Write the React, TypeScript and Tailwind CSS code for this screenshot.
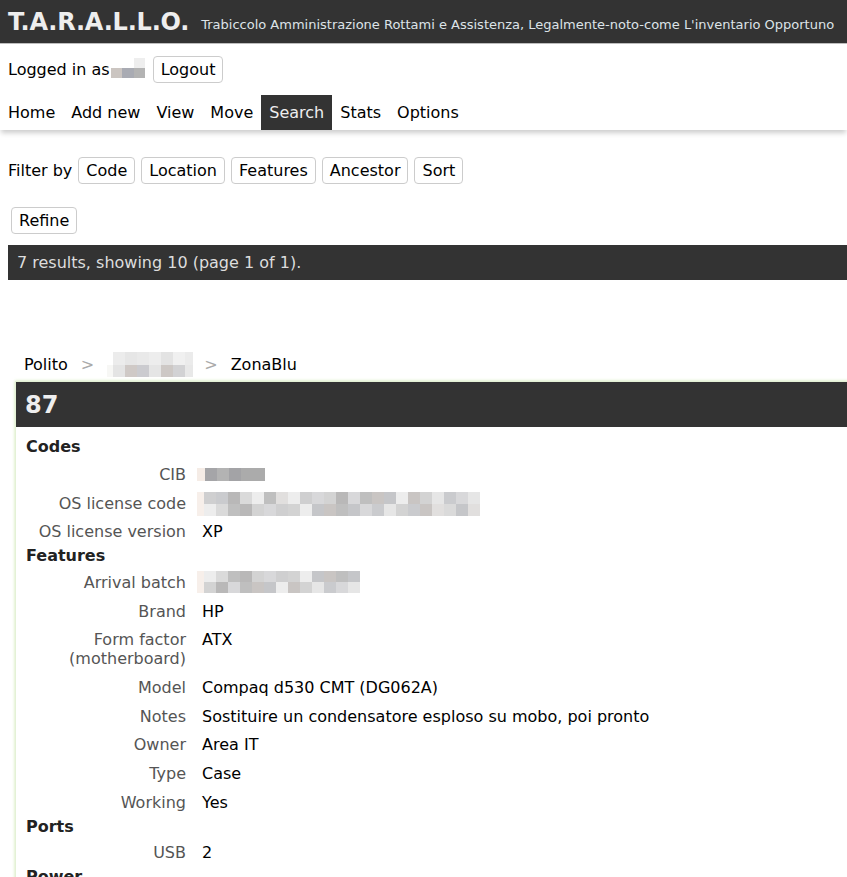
import React from 'react';

const gray = [
  'bg-[#c5c6c9]',
  'bg-[#d3d3d3]',
  'bg-[#bfbfbf]',
  'bg-[#cfcfd0]',
  'bg-[#dadada]',
  'bg-[#e6e6e6]',
  'bg-[#c9c5c3]',
  'bg-[#d8d8da]',
  'bg-[#ededed]',
  'bg-[#b9b8b8]',
  'bg-[#e1dfde]',
  'bg-[#cacbce]',
];

function Blur({ cols, rows, seed, cell }: { cols: number; rows: number; seed: number; cell: string }) {
  return (
    <span className="inline-block h-[18px] align-top ml-[-5px]">
      <span className="flex flex-col -mt-[3px]">
        {Array.from({ length: rows }).map((_, r) => (
          <span key={r} className="flex">
            <span className={`w-[7px] ${cell} bg-[#f7efea]`} />
            {Array.from({ length: cols }).map((_, c) => (
              <span key={c} className={`w-[12px] ${cell} ${gray[(c * 7 + r * 5 + seed + ((c * c) % 5)) % gray.length]}`} />
            ))}
          </span>
        ))}
      </span>
    </span>
  );
}

function Btn({ children }: { children: React.ReactNode }) {
  return (
    <button className="h-[27px] px-[7px] border border-[#cccccc] rounded-[4px] bg-white text-black leading-[normal]">
      {children}
    </button>
  );
}

type Row = { label: string; value?: string; blur?: React.ReactNode };

const sections: { title: string; rows: Row[] }[] = [
  {
    title: 'Codes',
    rows: [
      {
        label: 'CIB',
        blur: (
          <span className="inline-flex mt-[2px] ml-[-5px] align-top">
            <span className="w-[8px] h-[13px] bg-[#f5ece6]" />
            <span className="w-[12px] h-[13px] bg-[#a5a5a8]" />
            <span className="w-[12px] h-[13px] bg-[#b3b3b3]" />
            <span className="w-[12px] h-[13px] bg-[#a3a3a6]" />
            <span className="w-[12px] h-[13px] bg-[#ababab]" />
            <span className="w-[12px] h-[13px] bg-[#ababab]" />
          </span>
        ),
      },
      { label: 'OS license code', blur: <Blur cols={23} rows={2} seed={3} cell="h-[12px]" /> },
      { label: 'OS license version', value: 'XP' },
    ],
  },
  {
    title: 'Features',
    rows: [
      { label: 'Arrival batch', blur: <Blur cols={13} rows={2} seed={8} cell="h-[11px]" /> },
      { label: 'Brand', value: 'HP' },
      { label: 'Form factor (motherboard)', value: 'ATX' },
      { label: 'Model', value: 'Compaq d530 CMT (DG062A)' },
      { label: 'Notes', value: 'Sostituire un condensatore esploso su mobo, poi pronto' },
      { label: 'Owner', value: 'Area IT' },
      { label: 'Type', value: 'Case' },
      { label: 'Working', value: 'Yes' },
    ],
  },
  { title: 'Ports', rows: [{ label: 'USB', value: '2' }] },
  { title: 'Power', rows: [{ label: 'Power connector', value: 'ATX 24 pin' }] },
];

const nav = ['Home', 'Add new', 'View', 'Move', 'Search', 'Stats', 'Options'];

export default function App() {
  return (
    <div className="font-['DejaVu_Sans','Liberation_Sans',sans-serif] text-[16px] leading-[normal] text-black bg-white min-h-screen overflow-hidden">
      {/* header */}
      <div className="h-[44px] bg-[#333333] border-b border-[#bdbdbd] flex items-center pl-2 whitespace-nowrap overflow-hidden">
        <span className="text-[24px] font-bold text-[#eeeeee] tracking-[-0.2px]">T.A.R.A.L.L.O.</span>
        <span className="ml-[12px] mt-[5px] text-[13px] text-[#dde3e8]">
          Trabiccolo Amministrazione Rottami e Assistenza, Legalmente-noto-come L'inventario Opportuno
        </span>
      </div>

      <div className="flex items-center pl-2 pt-[12px]">
        <span>Logged in as</span>
        <span className="inline-flex flex-col ml-[1px] mt-[-4px]">
          <span className="flex">
            <span className="w-[11px] h-[10px] bg-white" />
            <span className="w-[12px] h-[10px] bg-white" />
            <span className="w-[11px] h-[10px] bg-[#eeeeee]" />
          </span>
          <span className="flex">
            <span className="w-[11px] h-[10px] bg-[#cbc5c1]" />
            <span className="w-[12px] h-[10px] bg-[#a9abb3]" />
            <span className="w-[11px] h-[10px] bg-[#b3b3b3]" />
          </span>
        </span>
        <span className="ml-[8px]">
          <Btn>Logout</Btn>
        </span>
      </div>

      <nav className="mt-3 flex bg-white shadow-[0_4px_5px_-1px_rgba(0,0,0,0.2)]">
        {nav.map((n) => (
          <span key={n} className={`px-2 py-2 ${n === 'Search' ? 'bg-[#333333] text-[#eeeeee]' : ''}`}>
            {n}
          </span>
        ))}
      </nav>

      <div className="mt-[27px] flex items-center pl-2 gap-[6px]">
        <span>Filter by</span>
        <Btn>Code</Btn>
        <Btn>Location</Btn>
        <Btn>Features</Btn>
        <Btn>Ancestor</Btn>
        <Btn>Sort</Btn>
      </div>

      <div className="mt-[23px] ml-[11px]">
        <Btn>Refine</Btn>
      </div>

      <div className="mt-[11px] ml-2 h-[35px] bg-[#333333] text-[#dddddd] flex items-center pl-[9px]">
        7 results, showing 10 (page 1 of 1).
      </div>

      {/* breadcrumb */}
      <div className="mt-[72px] pl-[24px] flex items-center">
        <span>Polito</span>
        <span className="mx-[13px] text-[#aaaaaa]">&gt;</span>
        <span className="inline-flex flex-col">
          <span className="flex">
            <span className="w-[6px] h-[13px] bg-white" />
            <span className="w-[12px] h-[13px] bg-[#ececec]" />
            <span className="w-[12px] h-[13px] bg-[#e6e6e6]" />
            <span className="w-[12px] h-[13px] bg-[#e9e9e9]" />
            <span className="w-[12px] h-[13px] bg-[#ededed]" />
            <span className="w-[12px] h-[13px] bg-[#e3e3e3]" />
            <span className="w-[12px] h-[13px] bg-[#f0f0f0]" />
            <span className="w-[8px] h-[13px] bg-[#ebebeb]" />
          </span>
          <span className="flex">
            <span className="w-[6px] h-[12px] bg-[#f7f7f5]" />
            <span className="w-[12px] h-[12px] bg-[#e4e4e4]" />
            <span className="w-[12px] h-[12px] bg-[#cfc9c6]" />
            <span className="w-[12px] h-[12px] bg-[#cbcbcf]" />
            <span className="w-[12px] h-[12px] bg-[#e5e5e5]" />
            <span className="w-[12px] h-[12px] bg-[#cdc8c5]" />
            <span className="w-[12px] h-[12px] bg-[#d2d2d4]" />
            <span className="w-[8px] h-[12px] bg-[#e8e8e8]" />
          </span>
        </span>
        <span className="ml-[11px] mr-[13px] text-[#aaaaaa]">&gt;</span>
        <span>ZonaBlu</span>
      </div>

      {/* item */}
      <div className="mt-[4px] ml-[15px] mr-[-12px] border border-[#e4f1d6] shadow-[0_0_3px_rgba(170,215,120,0.6)]">
        <div className="h-[45px] bg-[#333333] text-[#eeeeee] text-[24px] font-bold flex items-center pl-[9px]">87</div>
        <div className="pt-[11px] pl-[10px] leading-[18.75px]">
          {sections.map((s, i) => (
            <div key={s.title}>
              <div className={`font-bold text-[#222222] ${i === 0 ? 'pb-[4px]' : 'pb-[3px]'}`}>{s.title}</div>
              <div className="grid grid-cols-[160px_1fr] gap-x-4">
                {s.rows.map((r) => (
                  <React.Fragment key={r.label}>
                    <div className="py-[5px] text-right text-[#555555]">{r.label}</div>
                    <div className="py-[5px] text-black">{r.value ?? r.blur}</div>
                  </React.Fragment>
                ))}
              </div>
            </div>
          ))}
        </div>
      </div>
    </div>
  );
}
